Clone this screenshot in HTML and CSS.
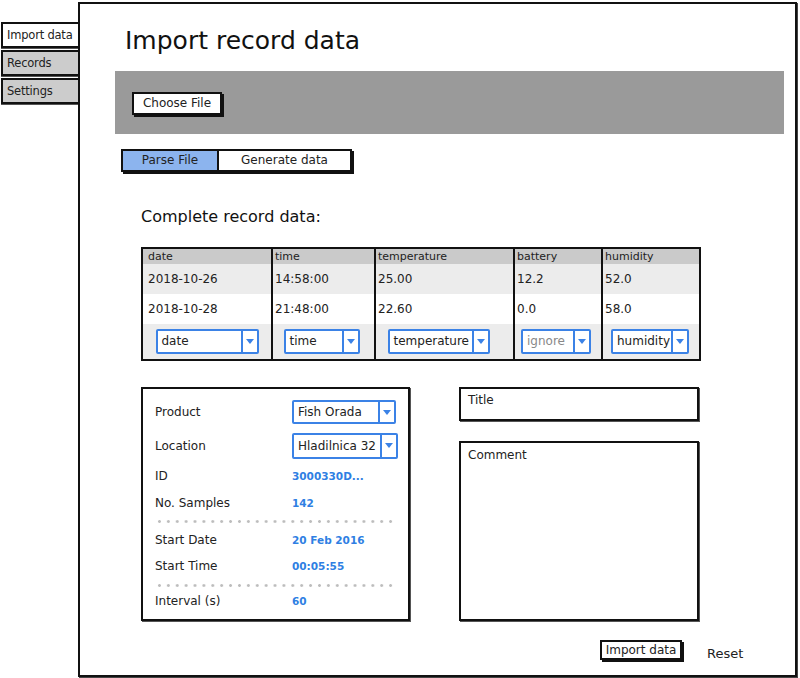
FILE: index.html
```html
<!DOCTYPE html>
<html>
<head>
<meta charset="utf-8">
<link rel="stylesheet" href="styles.css">
</head>
<body>
<div class="page">
  <nav class="side">
    <div class="side-tab side-tab--active">Import data</div>
    <div class="side-tab">Records</div>
    <div class="side-tab">Settings</div>
  </nav>
  <main class="frame">
    <h1 class="title">Import record data</h1>
    <div class="band">
      <div class="btn">Choose File</div>
    </div>
    <div class="tabs">
      <div class="tab tab--active">Parse File</div>
      <div class="tab tab--wide">Generate data</div>
    </div>
    <h2 class="heading">Complete record data:</h2>
    <table class="grid">
      <colgroup>
        <col class="c1"><col class="c2"><col class="c3"><col class="c4"><col class="c5">
      </colgroup>
      <tr class="row-head">
        <td class="first">date</td><td>time</td><td>temperature</td><td>battery</td><td>humidity</td>
      </tr>
      <tr class="row-a">
        <td class="first">2018-10-26</td><td>14:58:00</td><td>25.00</td><td>12.2</td><td>52.0</td>
      </tr>
      <tr class="row-b">
        <td class="first">2018-10-28</td><td>21:48:00</td><td>22.60</td><td>0.0</td><td>58.0</td>
      </tr>
      <tr class="row-sel">
        <td class="first"><div class="select w-date"><span class="select-text">date</span><span class="select-arrow"></span></div></td>
        <td><div class="select w-time"><span class="select-text">time</span><span class="select-arrow"></span></div></td>
        <td><div class="select w-temp"><span class="select-text">temperature</span><span class="select-arrow"></span></div></td>
        <td><div class="select w-ign"><span class="select-text muted">ignore</span><span class="select-arrow"></span></div></td>
        <td><div class="select w-hum"><span class="select-text">humidity</span><span class="select-arrow"></span></div></td>
      </tr>
    </table>
    <div class="lower">
      <div class="panel">
        <div class="prow r-product"><span class="plabel">Product</span><div class="select w-prod"><span class="select-text">Fish Orada</span><span class="select-arrow"></span></div></div>
        <div class="prow r-loc"><span class="plabel">Location</span><div class="select w-loc"><span class="select-text">Hladilnica 32</span><span class="select-arrow"></span></div></div>
        <div class="prow r-id"><span class="plabel">ID</span><span class="pval">3000330D...</span></div>
        <div class="prow r-tight"><span class="plabel">No. Samples</span><span class="pval">142</span></div>
        <div class="dots d1"></div>
        <div class="prow r-date"><span class="plabel">Start Date</span><span class="pval">20 Feb 2016</span></div>
        <div class="prow r-tight2"><span class="plabel">Start Time</span><span class="pval">00:05:55</span></div>
        <div class="dots d2"></div>
        <div class="prow r-tight2"><span class="plabel">Interval (s)</span><span class="pval">60</span></div>
      </div>
      <div class="fields">
        <div class="field field--title">Title</div>
        <div class="field field--comment">Comment</div>
      </div>
    </div>
    <div class="actions">
      <div class="btn btn--small">Import data</div>
      <span class="link">Reset</span>
    </div>
  </main>
</div>
</body>
</html>
```

FILE: styles.css
```css
* { box-sizing: border-box; }
html, body { margin: 0; padding: 0; background: #fff; }
body {
  font-family: "DejaVu Sans", "Liberation Sans", sans-serif;
  font-size: 12px;
  color: #222;
}
.page {
  display: flex;
  width: 800px;
  height: 678px;
}
.side {
  width: 77px;
  flex: none;
  padding-top: 22px;
  display: flex;
  flex-direction: column;
  gap: 2px;
  margin-left: 1px;
}
.side-tab {
  height: 26px;
  border: 2px solid #111;
  border-right: none;
  background: #cccccc;
  padding-left: 4px;
  line-height: 22px;
  font-size: 11.5px;
  letter-spacing: -0.2px;
  box-shadow: 0 1px 0 #555;
  white-space: nowrap;
}
.side-tab--active {
  background: #fff;
}
.frame {
  margin-top: 2px;
  width: 719px;
  height: 675px;
  flex: none;
  border: 2px solid #111;
  box-shadow: 1px 1px 0 #444;
  display: flex;
  flex-direction: column;
}
.title {
  margin: 22px 0 15px 45px;
  font-size: 25px;
  font-weight: normal;
  line-height: 30px;
  color: #111;
}
.band {
  margin-left: 35px;
  width: 669px;
  height: 63px;
  background: #9a9a9a;
  padding: 21px 0 0 17px;
}
.btn {
  display: inline-block;
  width: 90px;
  height: 23px;
  border: 2px solid #111;
  background: #fff;
  box-shadow: 2px 2px 0 #111;
  text-align: center;
  line-height: 19px;
  font-size: 12px;
}
.tabs {
  margin: 15px 0 0 41px;
  display: flex;
  width: max-content;
  border: 2px solid #111;
  box-shadow: 2px 2px 0 #111;
}
.tab {
  width: 96px;
  height: 19px;
  line-height: 19px;
  text-align: center;
  background: #fff;
  font-size: 12px;
}
.tab--active {
  background: #8cb4ee;
  border-right: 2px solid #111;
}
.tab--wide { width: 131px; }
.heading {
  margin: 35px 0 0 61px;
  font-size: 16px;
  font-weight: normal;
  line-height: 20px;
  color: #111;
}
.grid {
  margin: 20px 0 0 61px;
  width: 558px;
  border-collapse: collapse;
  table-layout: fixed;
  border: 2px solid #111;
}
.c1 { width: 130px; }
.c2 { width: 103px; }
.c3 { width: 139px; }
.c4 { width: 88px; }
.c5 { width: 98px; }
.grid td {
  border-left: 2px solid #111;
  border-right: 2px solid #111;
  padding: 0 0 0 2px;
  font-size: 12px;
  white-space: nowrap;
  overflow: hidden;
  vertical-align: middle;
}
.grid td.first { padding-left: 5px; }
.row-head td {
  height: 16px;
  background: #cacaca;
  font-size: 11px;
  line-height: 14px;
}
.row-a td { height: 30px; background: #ececec; }
.row-b td { height: 30px; background: #fff; }
.row-sel td { height: 36px; background: #ececec; padding: 0; text-align: center; }
.grid .row-sel td.first { padding: 0; }
.select {
  display: inline-flex;
  height: 25px;
  border: 2px solid #3b82e6;
  border-radius: 2px;
  background: #fff;
  text-align: left;
  vertical-align: middle;
}
.select-text {
  flex: 1;
  padding-left: 4px;
  line-height: 21px;
  font-size: 12px;
  color: #222;
  white-space: nowrap;
  overflow: hidden;
}
.select-text.muted { color: #888; }
.select-arrow {
  width: 16px;
  border-left: 2px solid #3b82e6;
  position: relative;
}
.select-arrow::after {
  content: "";
  position: absolute;
  left: 3px;
  top: 8px;
  border-left: 4px solid transparent;
  border-right: 4px solid transparent;
  border-top: 5px solid #3b82e6;
}
.w-date { width: 103px; }
.w-time { width: 76px; margin-right: 4px; }
.w-temp { width: 102px; margin-right: 12px; }
.w-ign { width: 70px; margin-right: 4px; }
.w-hum { width: 78px; margin-right: 2px; }
.w-prod { width: 104px; height: 24px; }
.w-loc { width: 106px; height: 26px; }
.w-loc .select-text { line-height: 22px; }
.lower {
  margin: 26px 0 0 61px;
  display: flex;
  gap: 49px;
}
.panel {
  width: 269px;
  height: 234px;
  border: 2px solid #111;
  box-shadow: 1px 1px 0 #555;
  padding: 0 0 0 12px;
  display: flex;
  flex-direction: column;
}
.prow {
  display: flex;
  align-items: center;
  height: 24px;
}
.plabel {
  width: 137px;
  font-size: 12px;
  color: #222;
}
.pval {
  font-size: 10.5px;
  font-weight: bold;
  color: #2f7fe3;
}
.r-product { margin-top: 11px; }
.r-loc { margin-top: 9px; height: 26px; }
.r-id { margin-top: 5px; }
.r-tight { margin-top: 3px; }
.r-date { margin-top: 5px; }
.r-tight2 { margin-top: 2px; }
.dots {
  width: 238px;
  height: 3px;
  background-image: radial-gradient(circle, #bdbdbd 1.2px, transparent 1.6px);
  background-size: 8.9px 3px;
  background-repeat: repeat-x;
}
.d1 { margin-top: 5px; }
.d2 { margin-top: 6px; }
.fields {
  display: flex;
  flex-direction: column;
  gap: 20px;
}
.field {
  width: 240px;
  border: 2px solid #111;
  box-shadow: 1px 1px 0 #555;
  padding: 4px 0 0 7px;
  font-size: 12px;
  color: #222;
  line-height: 14px;
}
.field--title { height: 34px; }
.field--comment { height: 180px; padding-top: 5px; }
.actions {
  margin: 19px 0 0 520px;
  display: flex;
  align-items: flex-start;
  gap: 25px;
}
.btn--small {
  width: 82px;
  height: 20px;
  line-height: 16px;
  font-size: 12px;
}
.link {
  margin-top: 6px;
  font-size: 13px;
  color: #222;
}
```
